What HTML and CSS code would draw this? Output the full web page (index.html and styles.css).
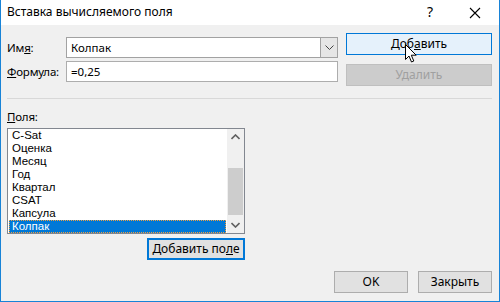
FILE: index.html
```html
<!DOCTYPE html>
<html lang="ru">
<head>
  <meta charset="UTF-8" />
  <meta name="viewport" content="width=device-width,initial-scale=1" />
  <title>Вставка вычисляемого поля</title>
  <link rel="stylesheet" href="styles.css">
</head>
<body>

  <div class="window">
    <div class="titlebar">
      <span class="title">Вставка вычисляемого поля</span>
      <span class="help">?</span>
      <svg class="close" width="12" height="12" viewBox="0 0 12 12">
        <path d="M1 1 L11 11 M11 1 L1 11" stroke="#000" stroke-width="1.1" fill="none" />
      </svg>
    </div>

    <div class="content">
      <div class="top">
        <div class="fields">
          <label class="lbl">Им<u>я</u>:</label>
          <div class="combo">
            <span class="combo-text">Колпак</span>
            <span class="combo-btn">
              <svg width="9" height="6" viewBox="0 0 9 6"><path d="M0.5 0.5 L4.5 4.5 L8.5 0.5" stroke="#444" fill="none" /></svg>
            </span>
          </div>
          <label class="lbl"><u>Ф</u>ормула:</label>
          <div class="input">=0,25</div>
        </div>
        <div class="side-buttons">
          <button class="btn btn-hover">Доб<u>а</u>вить</button>
          <button class="btn btn-disabled">Удалить</button>
        </div>
      </div>

      <div class="separator"></div>

      <div class="list-block">
        <div class="lbl list-label"><u>П</u>оля:</div>
        <div class="listbox">
          <ul class="items">
            <li>C-Sat</li>
            <li>Оценка</li>
            <li>Месяц</li>
            <li>Год</li>
            <li>Квартал</li>
            <li>CSAT</li>
            <li>Капсула</li>
            <li class="selected">Колпак</li>
          </ul>
          <div class="scrollbar">
            <svg class="arrow" width="9" height="6" viewBox="0 0 9 6"><path d="M0.5 5 L4.5 1 L8.5 5" stroke="#606060" stroke-width="1.6" fill="none" /></svg>
            <div class="track"><div class="thumb"></div></div>
            <svg class="arrow" width="9" height="6" viewBox="0 0 9 6"><path d="M0.5 1 L4.5 5 L8.5 1" stroke="#606060" stroke-width="1.6" fill="none" /></svg>
          </div>
        </div>
        <div class="list-actions">
          <button class="btn btn-default">Добавить по<u>л</u>е</button>
        </div>
      </div>

      <div class="footer">
        <button class="btn btn-footer">OK</button>
        <button class="btn btn-footer">Закрыть</button>
      </div>
    </div>

    <svg class="cursor" width="13" height="20" viewBox="0 0 13 20">
      <path d="M0.5 0.5 L0.5 15.5 L4 12 L6.5 18 L8.8 17 L6.3 11.2 L11.2 11.2 Z" fill="#fff" stroke="#000" stroke-width="1" />
    </svg>
  </div>

</body>
</html>
```

FILE: styles.css
```css
body {
  margin: 0;
  padding: 0;
  font-family: "Noto Sans", "Open Sans", sans-serif;
  font-size: 11.5px;
  color: #000;
}
u {
  text-decoration: underline;
  text-underline-offset: 1px;
}
.window {
  position: relative;
  width: 500px;
  height: 302px;
  box-sizing: border-box;
  border: 1px solid #1883d7;
  border-top: none;
  background: #f0f0f0;
  display: flex;
  flex-direction: column;
}
.titlebar {
  height: 25px;
  background: #fff;
  display: flex;
  align-items: center;
  padding: 0 18px 0 6px;
}
.title {
  flex: 1;
  font-size: 12px;
  padding-bottom: 2px;
}
.help {
  font-size: 14px;
  margin-right: 36px;
  padding-bottom: 2px;
}
.close {
  display: block;
}
.content {
  flex: 1;
  display: flex;
  flex-direction: column;
  padding: 8px 7px 8px 6px;
}
.top {
  display: flex;
  justify-content: space-between;
}
.fields {
  display: grid;
  grid-template-columns: 59px 272px;
  grid-auto-rows: 21px;
  row-gap: 3px;
  align-items: center;
  margin-top: 4px;
}
.lbl {
  line-height: 16px;
  letter-spacing: -0.2px;
}
.combo,
.input {
  height: 21px;
  box-sizing: border-box;
  background: #fff;
  display: flex;
  align-items: center;
  padding-left: 4px;
}
.combo {
  border: 1px solid #a2a2a2;
  padding-right: 0;
}
.combo-text {
  flex: 1;
}
.combo-btn {
  width: 16px;
  height: 19px;
  background: #e6e6e6;
  border-left: 1px solid #a2a2a2;
  display: flex;
  align-items: center;
  justify-content: center;
}
.input {
  border: 1px solid #adadad;
}
.side-buttons {
  display: flex;
  flex-direction: column;
  gap: 9px;
  width: 146px;
}
.btn {
  font-family: inherit;
  font-size: 12px;
  color: #000;
  height: 22px;
  box-sizing: border-box;
  padding: 0 0 2px;
  border: 1px solid #adadad;
  background: #e1e1e1;
  margin: 0;
}
.btn-hover {
  background: #e5f1fb;
  border-color: #0078d7;
}
.btn-disabled {
  background: #cccccc;
  border-color: #bfbfbf;
  color: #a0a0a0;
}
.separator {
  height: 1px;
  background: #d8d8d8;
  margin: 12px 0 0;
}
.list-block {
  width: 238px;
  display: flex;
  flex-direction: column;
}
.list-label {
  margin-top: 10px;
  margin-bottom: 3px;
}
.listbox {
  height: 106px;
  box-sizing: border-box;
  border: 1px solid #828790;
  background: #fff;
  display: flex;
}
.items {
  list-style: none;
  margin: 0;
  padding: 0 1px;
  flex: 1;
}
.items li {
  height: 13px;
  line-height: 13px;
  font-family: "Liberation Sans", Arial, sans-serif;
  font-size: 11.5px;
  padding-left: 3px;
}
.items li.selected {
  background: #0078d7;
  color: #fff;
  outline: 1px dotted #f0a040;
  outline-offset: -1px;
}
.scrollbar {
  width: 17px;
  background: #f0f0f0;
  display: flex;
  flex-direction: column;
  align-items: center;
}
.arrow {
  display: block;
  margin: 5px 0;
}
.track {
  flex: 1;
  width: 15px;
  display: flex;
  flex-direction: column;
  justify-content: flex-end;
}
.thumb {
  height: 47px;
  background: #cdcdcd;
  margin-bottom: 2px;
}
.list-actions {
  display: flex;
  justify-content: flex-end;
  margin-top: 4px;
}
.btn-default {
  width: 98px;
  border: 2px solid #0078d7;
}
.footer {
  margin-top: auto;
  display: flex;
  justify-content: flex-end;
  gap: 10px;
}
.btn-footer {
  width: 74px;
}
.cursor {
  position: absolute;
  left: 404px;
  top: 44px;
}
```
